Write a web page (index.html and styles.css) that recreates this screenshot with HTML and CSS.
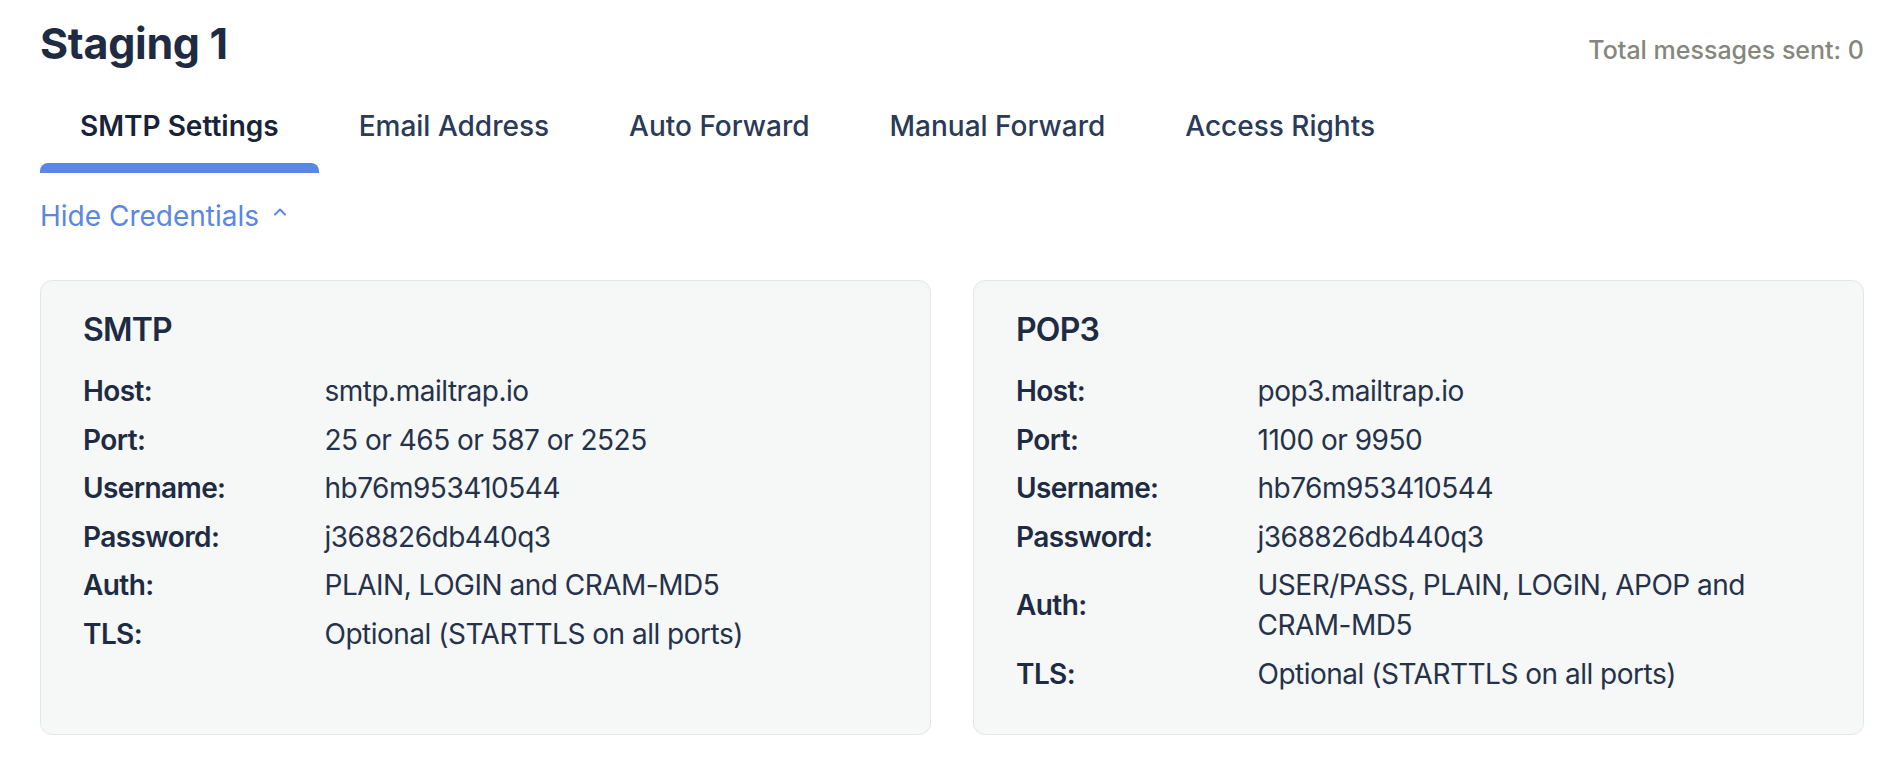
FILE: index.html
```html
<!DOCTYPE html>
<html lang="en">
<head>
<meta charset="utf-8">
<title>Staging 1</title>
<link rel="stylesheet" href="styles.css">
</head>
<body>
<div class="page">
  <header class="header">
    <h1 class="title">Staging 1</h1>
    <div class="total">Total messages sent: 0</div>
  </header>
  <nav class="tabs">
    <a class="tab active"><span class="tab-label">SMTP Settings</span><span class="tab-bar"></span></a>
    <a class="tab"><span class="tab-label">Email Address</span><span class="tab-bar"></span></a>
    <a class="tab"><span class="tab-label">Auto Forward</span><span class="tab-bar"></span></a>
    <a class="tab"><span class="tab-label">Manual Forward</span><span class="tab-bar"></span></a>
    <a class="tab"><span class="tab-label">Access Rights</span><span class="tab-bar"></span></a>
  </nav>
  <a class="toggle">Hide Credentials
    <svg class="chevron" width="14" height="9" viewBox="0 0 14 9"><path d="M2 7.5 L7 2.5 L12 7.5" fill="none" stroke="currentColor" stroke-width="2" stroke-linecap="round" stroke-linejoin="round"/></svg>
  </a>
  <section class="cards">
    <div class="card">
      <h2 class="card-title">SMTP</h2>
      <dl class="creds">
        <dt>Host:</dt><dd>smtp.mailtrap.io</dd>
        <dt>Port:</dt><dd>25 or 465 or 587 or 2525</dd>
        <dt>Username:</dt><dd>hb76m953410544</dd>
        <dt>Password:</dt><dd>j368826db440q3</dd>
        <dt>Auth:</dt><dd>PLAIN, LOGIN and CRAM-MD5</dd>
        <dt>TLS:</dt><dd>Optional (STARTTLS on all ports)</dd>
      </dl>
    </div>
    <div class="card">
      <h2 class="card-title">POP3</h2>
      <dl class="creds">
        <dt>Host:</dt><dd>pop3.mailtrap.io</dd>
        <dt>Port:</dt><dd>1100 or 9950</dd>
        <dt>Username:</dt><dd>hb76m953410544</dd>
        <dt>Password:</dt><dd>j368826db440q3</dd>
        <dt>Auth:</dt><dd>USER/PASS, PLAIN, LOGIN, APOP and CRAM-MD5</dd>
        <dt>TLS:</dt><dd>Optional (STARTTLS on all ports)</dd>
      </dl>
    </div>
  </section>
</div>
</body>
</html>
```
FILE: styles.css
```css
* { box-sizing: border-box; }
html, body { margin: 0; padding: 0; background: #ffffff; }
body {
  font-family: Inter, "Noto Sans", "Liberation Sans", sans-serif;
  color: #1e2b42;
}
.page { padding: 0 40px; }

.header {
  display: flex;
  justify-content: space-between;
  align-items: baseline;
  padding-top: 17px;
}
.title {
  margin: 0;
  font-size: 43px;
  line-height: 53px;
  font-weight: 700;
  color: #1e2b42;
  letter-spacing: -0.3px;
}
.total {
  font-size: 25px;
  font-weight: 500;
  color: #85867c;
}

.tabs {
  display: flex;
  padding-top: 36px;
}
.tab {
  display: flex;
  flex-direction: column;
  font-size: 28px;
  line-height: 40px;
  font-weight: 500;
  color: #2a3a58;
  cursor: pointer;
}
.tab-label { padding: 0 40px 17px; }
.tab-bar {
  height: 10px;
  border-radius: 8px 8px 0 0;
  background: transparent;
}
.tab.active { color: #18233a; font-weight: 600; }
.tab.active .tab-bar { background: #5a86e4; }

.toggle {
  display: inline-flex;
  align-items: center;
  gap: 14px;
  margin-top: 23px;
  font-size: 28px;
  line-height: 40px;
  color: #5a86e4;
  cursor: pointer;
}
.chevron { margin-top: -10px; }

.cards {
  display: grid;
  grid-template-columns: 1fr 1fr;
  gap: 42px;
  margin-top: 44px;
}
.card {
  background: #f6f7f7;
  border: 1px solid #e4e6e6;
  border-radius: 12px;
  padding: 29px 42px 40px;
}
.card-title {
  margin: 0 0 21px;
  font-size: 32px;
  line-height: 40px;
  font-weight: 600;
  letter-spacing: -0.8px;
  color: #1e2b42;
}
.creds {
  display: grid;
  grid-template-columns: 30% 1fr;
  row-gap: 8.5px;
  margin: 0;
  font-size: 28px;
  line-height: 40px;
  align-items: center;
}
.creds dt { font-weight: 600; color: #1e2b42; letter-spacing: -0.6px; }
.creds dd { margin: 0; color: #25324a; letter-spacing: -0.5px; }
```
